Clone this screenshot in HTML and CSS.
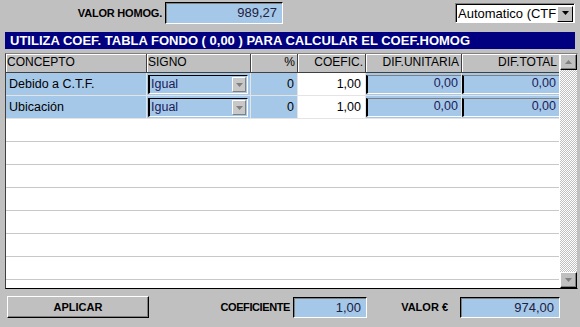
FILE: index.html
```html
<!DOCTYPE html>
<html>
<head>
<meta charset="utf-8">
<link rel="stylesheet" href="styles.css">
</head>
<body>
<div class="top">
  <div class="lbl-homog">VALOR HOMOG.</div>
  <div class="field field-homog">989,27</div>
  <div class="spacer"></div>
  <div class="combo">
    <span class="combo-text">Automatico (CTF</span>
    <span class="combo-btn"><svg width="9" height="5" viewBox="0 0 9 5"><path d="M1 0h7L4.5 4z" fill="#000"/></svg></span>
  </div>
</div>
<div class="title">UTILIZA COEF. TABLA FONDO ( 0,00 ) PARA CALCULAR EL COEF.HOMOG</div>
<div class="grid">
  <div class="grid-main">
    <div class="row head">
      <div class="hc">CONCEPTO</div>
      <div class="hc">SIGNO</div>
      <div class="hc r">%</div>
      <div class="hc r">COEFIC.</div>
      <div class="hc r">DIF.UNITARIA</div>
      <div class="hc r">DIF.TOTAL</div>
    </div>
    <div class="row data">
      <div class="c blue">Debido a C.T.F.</div>
      <div class="c blue"><div class="sel"><span class="sel-text">Igual</span><span class="sel-btn"><svg width="7" height="4" viewBox="0 0 7 4"><path d="M0 0h7L3.5 4z" fill="#808080"/></svg></span></div></div>
      <div class="c blue r">0</div>
      <div class="c white r">1,00</div>
      <div class="c blue"><div class="sunk">0,00</div></div>
      <div class="c blue"><div class="sunk">0,00</div></div>
    </div>
    <div class="row data">
      <div class="c blue">Ubicación</div>
      <div class="c blue"><div class="sel"><span class="sel-text">Igual</span><span class="sel-btn"><svg width="7" height="4" viewBox="0 0 7 4"><path d="M0 0h7L3.5 4z" fill="#808080"/></svg></span></div></div>
      <div class="c blue r">0</div>
      <div class="c white r">1,00</div>
      <div class="c blue"><div class="sunk">0,00</div></div>
      <div class="c blue"><div class="sunk">0,00</div></div>
    </div>
    <div class="empty"></div>
    <div class="empty"></div>
    <div class="empty"></div>
    <div class="empty"></div>
    <div class="empty"></div>
    <div class="empty"></div>
    <div class="empty"></div>
    <div class="empty"></div>
  </div>
  <div class="sb">
    <div class="sb-btn"><svg width="7" height="4" viewBox="0 0 7 4"><path d="M3.5 0L7 4H0z" fill="#808080"/></svg></div>
    <div class="sb-track"></div>
    <div class="sb-btn"><svg width="7" height="4" viewBox="0 0 7 4"><path d="M0 0h7L3.5 4z" fill="#808080"/></svg></div>
  </div>
</div>
<div class="bottom">
  <div class="btn">APLICAR</div>
  <div class="lbl-coef">COEFICIENTE</div>
  <div class="field field-coef">1,00</div>
  <div class="lbl-valor">VALOR €</div>
  <div class="field field-valor">974,00</div>
</div>
</body>
</html>
```
FILE: styles.css
```css
html, body {
  margin: 0;
  padding: 0;
  background: #c0c0c0;
  font-family: "Liberation Sans", Arial, sans-serif;
  width: 580px;
  height: 327px;
  overflow: hidden;
}
.top {
  display: flex;
  align-items: center;
  height: 24px;
  padding-top: 1px;
}
.lbl-homog {
  width: 165px;
  text-align: right;
  padding-right: 3px;
  box-sizing: border-box;
  font-size: 11px;
  font-weight: bold;
  letter-spacing: -0.2px;
}
.field {
  box-sizing: border-box;
  background: #a6c8e8;
  border-top: 1px solid #000;
  border-left: 1px solid #000;
  border-right: 1px solid #fff;
  border-bottom: 1px solid #fff;
  box-shadow: inset 1px 1px 0 #808080;
  text-align: right;
  font-size: 13px;
  color: #202040;
  padding-right: 5px;
}
.field-homog {
  width: 118px;
  height: 22px;
  line-height: 20px;
}
.spacer { flex: 1; }
.combo {
  width: 120px;
  height: 20px;
  margin-right: 5px;
  box-sizing: border-box;
  background: #fff;
  border-top: 1px solid #808080;
  border-left: 1px solid #808080;
  border-right: 1px solid #fff;
  border-bottom: 1px solid #fff;
  box-shadow: inset 1px 1px 0 #000;
  display: flex;
  align-items: center;
  padding: 1px 1px 0 2px;
}
.combo-text {
  flex: 1;
  font-size: 13px;
  white-space: nowrap;
  overflow: hidden;
}
.combo-btn {
  width: 16px;
  height: 16px;
  box-sizing: border-box;
  background: #c0c0c0;
  border-top: 1px solid #fff;
  border-left: 1px solid #fff;
  border-right: 1px solid #000;
  border-bottom: 1px solid #000;
  display: flex;
  align-items: center;
  justify-content: center;
}
.title {
  margin: 7px 5px 0 5px;
  height: 17px;
  background: #000080;
  color: #fff;
  font-weight: bold;
  font-size: 13px;
  line-height: 17px;
  padding-left: 5px;
  white-space: nowrap;
  overflow: hidden;
}
.grid {
  margin: 4px 2px 0 5px;
  height: 236px;
  box-sizing: border-box;
  border-top: 1px solid #808080;
  border-left: 1px solid #404040;
  border-bottom: 1px solid #000;
  border-right: 1px solid #c0c0c0;
  background: #fff;
  display: flex;
  overflow: hidden;
}
.grid-main {
  width: 554px;
  overflow: hidden;
}
.row {
  display: grid;
  grid-template-columns: 141px 104px 47px 68px 96px 98px;
}
.head {
  height: 19px;
  background: #c0c0c0;
}
.hc {
  box-sizing: border-box;
  font-size: 12px;
  line-height: 17px;
  padding: 0 2px 0 1px;
  border-right: 1px solid #404040;
  border-bottom: 1px solid #404040;
  box-shadow: inset 1px 1px 0 #fff;
  white-space: nowrap;
  overflow: hidden;
}
.r { text-align: right; }
.data {
  height: 23px;
}
.c {
  box-sizing: border-box;
  font-size: 12.5px;
  line-height: 22px;
  border-bottom: 1px solid #e4e4e4;
  border-right: 1px solid #e4e4e4;
  padding: 0 3px;
  white-space: nowrap;
  overflow: hidden;
}
.blue { background: #a6c8e8; }
.white { background: #fff; padding-right: 4px; }
.sel {
  margin: 2px 0 0 -2px;
  height: 19px;
  width: 100px;
  box-sizing: border-box;
  border-top: 1px solid #000;
  border-left: 2px solid #000;
  border-right: 1px solid #fff;
  border-bottom: 1px solid #fff;
  display: flex;
  align-items: center;
}
.sel-text {
  flex: 1;
  color: #1a1a5a;
  font-size: 12.5px;
  line-height: 17px;
  padding-left: 1px;
}
.sel-btn {
  width: 14px;
  height: 15px;
  box-sizing: border-box;
  background: #c8c8c8;
  border-top: 1px solid #fff;
  border-left: 1px solid #fff;
  border-right: 1px solid #808080;
  border-bottom: 1px solid #808080;
  display: flex;
  align-items: center;
  justify-content: center;
  margin-right: 1px;
}
.sunk {
  margin: 2px -3px 0 -3px;
  height: 19px;
  box-sizing: border-box;
  border-top: 1px solid #808080;
  border-left: 2px solid #000;
  border-bottom: 1px solid #fff;
  text-align: right;
  color: #1a1a5a;
  line-height: 14px;
  padding-right: 3px;
}
.empty {
  height: 23px;
  box-sizing: border-box;
  border-bottom: 1px solid #c8c8c8;
}
.sb {
  width: 17px;
  display: flex;
  flex-direction: column;
  margin-left: 1px;
}
.sb-track {
  flex: 1;
  background: repeating-conic-gradient(#c0c0c0 0 25%, #fff 0 50%) 0 0 / 2px 2px;
}
.sb-btn {
  height: 16px;
  box-sizing: border-box;
  background: #c0c0c0;
  border-top: 1px solid #fff;
  border-left: 1px solid #fff;
  border-right: 1px solid #000;
  border-bottom: 1px solid #000;
  box-shadow: inset -1px -1px 0 #808080;
  display: flex;
  align-items: center;
  justify-content: center;
}
.bottom {
  display: flex;
  align-items: center;
  margin-top: 7px;
  height: 22px;
}
.btn {
  margin-left: 7px;
  width: 142px;
  height: 22px;
  box-sizing: border-box;
  background: #c0c0c0;
  border-top: 1px solid #fff;
  border-left: 1px solid #fff;
  border-right: 1px solid #000;
  border-bottom: 1px solid #000;
  box-shadow: inset -1px -1px 0 #808080;
  text-align: center;
  font-size: 11px;
  font-weight: bold;
  line-height: 20px;
}
.lbl-coef {
  width: 144px;
  box-sizing: border-box;
  text-align: right;
  padding-right: 3px;
  font-size: 11px;
  font-weight: bold;
  letter-spacing: -0.4px;
}
.field-coef {
  width: 74px;
  height: 21px;
  line-height: 19px;
}
.lbl-valor {
  width: 93px;
  box-sizing: border-box;
  text-align: right;
  padding-right: 12px;
  font-size: 11px;
  font-weight: bold;
}
.field-valor {
  width: 100px;
  height: 21px;
  line-height: 19px;
}
```
